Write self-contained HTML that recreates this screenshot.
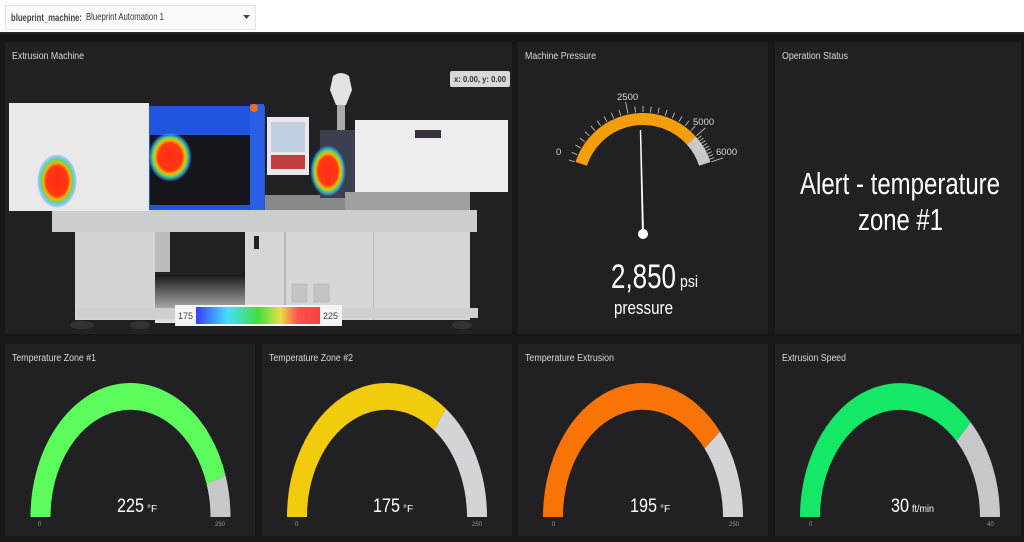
<!DOCTYPE html>
<html><head><meta charset="utf-8"><style>
html,body{margin:0;padding:0;background:#161719;width:1024px;height:542px;overflow:hidden}
svg{display:block;font-family:"Liberation Sans",sans-serif}
</style></head><body>
<svg width="1024" height="542" viewBox="0 0 1024 542" xmlns="http://www.w3.org/2000/svg">
<defs>
<radialGradient id="heat" cx="50%" cy="50%" r="50%">
<stop offset="0" stop-color="#ff2a1a"/><stop offset="0.55" stop-color="#ff3a10"/><stop offset="0.68" stop-color="#ffb000"/><stop offset="0.78" stop-color="#5ce05c"/><stop offset="0.9" stop-color="#40b0ff" stop-opacity="0.6"/><stop offset="1" stop-color="#4060ff" stop-opacity="0"/>
</radialGradient>
<linearGradient id="cbar" x1="0" x2="1">
<stop offset="0" stop-color="#3a3aff"/><stop offset="0.25" stop-color="#40e0ff"/><stop offset="0.5" stop-color="#40e040"/><stop offset="0.68" stop-color="#e8e040"/><stop offset="0.82" stop-color="#ff5050"/><stop offset="1" stop-color="#ff4040"/>
</linearGradient>
<linearGradient id="floor" x1="0" y1="0" x2="0" y2="1"><stop offset="0" stop-color="#1a1a1a"/><stop offset="1" stop-color="#e8e8e8"/></linearGradient>
</defs>
<rect x="0" y="0" width="1024" height="33" fill="#ffffff"/>
<rect x="0" y="32" width="1024" height="2" fill="#2a2a2c"/>
<rect x="5.5" y="5.5" width="250" height="24" fill="#fafafa" stroke="#e4e4e4"/>
<text x="11" y="21" font-size="10" font-weight="bold" fill="#444" textLength="71" lengthAdjust="spacingAndGlyphs">blueprint_machine:</text>
<text x="86" y="20" font-size="10" fill="#333" textLength="78" lengthAdjust="spacingAndGlyphs">Blueprint Automation 1</text>
<path d="M243,15 h7 l-3.5,4 z" fill="#444"/>
<rect x="5" y="42" width="507" height="292" fill="#212124"/>
<rect x="518" y="42" width="250" height="292" fill="#212124"/>
<rect x="775" y="42" width="246" height="292" fill="#212124"/>
<rect x="5" y="344" width="250" height="192" fill="#212124"/>
<rect x="262" y="344" width="250" height="192" fill="#212124"/>
<rect x="518" y="344" width="250" height="192" fill="#212124"/>
<rect x="775" y="344" width="246" height="192" fill="#212124"/>
<g font-size="10" fill="#d8d9da">
<text x="12" y="59" textLength="72" lengthAdjust="spacingAndGlyphs">Extrusion Machine</text>
<text x="525" y="59" textLength="71" lengthAdjust="spacingAndGlyphs">Machine Pressure</text>
<text x="782" y="59" textLength="66" lengthAdjust="spacingAndGlyphs">Operation Status</text>
<text x="12" y="361" textLength="84" lengthAdjust="spacingAndGlyphs">Temperature Zone #1</text>
<text x="269" y="361" textLength="84" lengthAdjust="spacingAndGlyphs">Temperature Zone #2</text>
<text x="525" y="361" textLength="89" lengthAdjust="spacingAndGlyphs">Temperature Extrusion</text>
<text x="782" y="361" textLength="64" lengthAdjust="spacingAndGlyphs">Extrusion Speed</text>
</g>
<rect x="155" y="275" width="90" height="48" fill="url(#floor)"/>
<rect x="75" y="232" width="80" height="88" fill="#d4d4d4"/>
<rect x="155" y="232" width="15" height="40" fill="#bbb"/>
<rect x="245" y="232" width="225" height="88" fill="#d6d6d6"/>
<rect x="284" y="232" width="2" height="88" fill="#b8b8b8"/>
<rect x="373" y="232" width="1" height="88" fill="#bcbcbc"/>
<rect x="254" y="236" width="5" height="13" fill="#222"/>
<rect x="292" y="284" width="15" height="18" fill="#c4c4c4" stroke="#aaa" stroke-width="0.5"/>
<rect x="314" y="284" width="15" height="18" fill="#c4c4c4" stroke="#aaa" stroke-width="0.5"/>
<rect x="78" y="308" width="400" height="10" fill="#cfcfcf"/>
<ellipse cx="82" cy="325" rx="12" ry="4" fill="#333"/>
<ellipse cx="140" cy="325" rx="10" ry="4" fill="#333"/>
<ellipse cx="462" cy="325" rx="10" ry="4" fill="#333"/>
<rect x="52" y="210" width="425" height="22" fill="#cdcdcd"/>
<rect x="9" y="103" width="140" height="108" fill="#e9e9e9"/>
<rect x="149" y="106" width="116" height="104" fill="#1f55e0"/>
<rect x="150" y="135" width="100" height="70" fill="#15161c"/>
<rect x="250" y="104" width="14" height="106" fill="#2a5fe8"/>
<circle cx="254" cy="108" r="4" fill="#ff6a10"/>
<rect x="265" y="195" width="90" height="15" fill="#888"/>
<rect x="267" y="117" width="42" height="58" fill="#e8e8ee"/>
<rect x="271" y="122" width="34" height="30" fill="#c0d0e0"/>
<rect x="271" y="155" width="34" height="14" fill="#c04040"/>
<path d="M333,76 Q341,70 349,76 L352,90 L346,105 L336,105 L330,90 Z" fill="#e2e2e2"/>
<rect x="337" y="105" width="8" height="25" fill="#aaa"/>
<rect x="320" y="130" width="40" height="68" fill="#3a4050"/>
<rect x="355" y="120" width="153" height="72" fill="#ededed"/>
<rect x="415" y="130" width="26" height="8" fill="#3a3040"/>
<rect x="345" y="192" width="125" height="18" fill="#a0a0a0"/>
<ellipse cx="57" cy="181" rx="20" ry="27" fill="url(#heat)"/>
<ellipse cx="170" cy="157" rx="22" ry="25" fill="url(#heat)"/>
<ellipse cx="328" cy="171" rx="18" ry="26" fill="url(#heat)"/>
<rect x="175" y="305" width="167" height="21" fill="#f4f4f4"/>
<rect x="196" y="307" width="124" height="17" fill="url(#cbar)"/>
<text x="178" y="319" font-size="9" fill="#444">175</text>
<text x="323" y="319" font-size="9" fill="#444">225</text>
<rect x="450" y="71" width="60" height="16" rx="2" fill="#d8d8d8"/>
<text x="454" y="82" font-size="8.5" font-weight="bold" fill="#333" textLength="52" lengthAdjust="spacingAndGlyphs">x: 0.00, y: 0.00</text>
<path d="M581.2,163.9 A65 65 0 0 1 691.3,140.5" fill="none" stroke="#f59e0b" stroke-width="12"/>
<path d="M691.3,140.5 A65 65 0 0 1 704.8,163.9" fill="none" stroke="#c8c8c8" stroke-width="12"/>
<g stroke="#cfcfcf" stroke-width="0.8">
<line x1="643" y1="112" x2="643" y2="106" transform="rotate(-72 643 184)"/>
<line x1="643" y1="112" x2="643" y2="106" transform="rotate(-66 643 184)"/>
<line x1="643" y1="112" x2="643" y2="106" transform="rotate(-60 643 184)"/>
<line x1="643" y1="112" x2="643" y2="106" transform="rotate(-54 643 184)"/>
<line x1="643" y1="112" x2="643" y2="106" transform="rotate(-48 643 184)"/>
<line x1="643" y1="112" x2="643" y2="106" transform="rotate(-42 643 184)"/>
<line x1="643" y1="112" x2="643" y2="106" transform="rotate(-36 643 184)"/>
<line x1="643" y1="112" x2="643" y2="106" transform="rotate(-30 643 184)"/>
<line x1="643" y1="112" x2="643" y2="106" transform="rotate(-24 643 184)"/>
<line x1="643" y1="112" x2="643" y2="106" transform="rotate(-18 643 184)"/>
<line x1="643" y1="112" x2="643" y2="100" transform="rotate(-12 643 184)"/>
<line x1="643" y1="112" x2="643" y2="106" transform="rotate(-6 643 184)"/>
<line x1="643" y1="112" x2="643" y2="106"/>
<line x1="643" y1="112" x2="643" y2="106" transform="rotate(6 643 184)"/>
<line x1="643" y1="112" x2="643" y2="106" transform="rotate(12 643 184)"/>
<line x1="643" y1="112" x2="643" y2="106" transform="rotate(18 643 184)"/>
<line x1="643" y1="112" x2="643" y2="106" transform="rotate(24 643 184)"/>
<line x1="643" y1="112" x2="643" y2="106" transform="rotate(30 643 184)"/>
<line x1="643" y1="112" x2="643" y2="106" transform="rotate(36 643 184)"/>
<line x1="643" y1="112" x2="643" y2="106" transform="rotate(42 643 184)"/>
<line x1="643" y1="112" x2="643" y2="100" transform="rotate(48 643 184)"/>
<line x1="643" y1="118" x2="643" y2="108" transform="rotate(50.4 643 184)"/>
<line x1="643" y1="118" x2="643" y2="108" transform="rotate(52.8 643 184)"/>
<line x1="643" y1="118" x2="643" y2="108" transform="rotate(55.2 643 184)"/>
<line x1="643" y1="118" x2="643" y2="108" transform="rotate(57.6 643 184)"/>
<line x1="643" y1="118" x2="643" y2="108" transform="rotate(60 643 184)"/>
<line x1="643" y1="118" x2="643" y2="108" transform="rotate(62.4 643 184)"/>
<line x1="643" y1="118" x2="643" y2="108" transform="rotate(64.8 643 184)"/>
<line x1="643" y1="118" x2="643" y2="108" transform="rotate(67.2 643 184)"/>
<line x1="643" y1="118" x2="643" y2="108" transform="rotate(69.6 643 184)"/>
<line x1="643" y1="112" x2="643" y2="100" transform="rotate(72 643 184)"/>
</g>
<g font-size="9.5" fill="#d8d9da">
<text x="556" y="155">0</text>
<text x="617" y="100">2500</text>
<text x="693" y="125">5000</text>
<text x="716" y="155">6000</text>
</g>
<path d="M639.8,130 L641.2,130 L644,234 L642,234 Z" fill="#fff"/>
<circle cx="643" cy="234" r="5" fill="#fff"/>
<text x="611" y="288" font-size="34" fill="#fff" textLength="65" lengthAdjust="spacingAndGlyphs">2,850</text>
<text x="680" y="287" font-size="17" fill="#fff" textLength="18" lengthAdjust="spacingAndGlyphs">psi</text>
<text x="614" y="314" font-size="18" fill="#fff" textLength="59" lengthAdjust="spacingAndGlyphs">pressure</text>
<text x="800" y="194" font-size="31" fill="#fff" textLength="200" lengthAdjust="spacingAndGlyphs">Alert - temperature</text>
<text x="858" y="230" font-size="31" fill="#fff" textLength="85" lengthAdjust="spacingAndGlyphs">zone #1</text>
<g fill="none" stroke-width="20">
<g transform="translate(130.5,517) scale(1,1.34)">
<path d="M-90,0 A90 90 0 0 1 85.6,-27.8" stroke="#5cfc5c"/>
<path d="M85.6,-27.8 A90 90 0 0 1 90,0" stroke="#c8c8cc"/>
</g>
<g transform="translate(387,517) scale(1,1.34)">
<path d="M-90,0 A90 90 0 0 1 52.9,-72.8" stroke="#f2cc0c"/>
<path d="M52.9,-72.8 A90 90 0 0 1 90,0" stroke="#d4d4d8"/>
</g>
<g transform="translate(643,517) scale(1,1.34)">
<path d="M-90,0 A90 90 0 0 1 69.3,-57.4" stroke="#f97406"/>
<path d="M69.3,-57.4 A90 90 0 0 1 90,0" stroke="#d4d4d8"/>
</g>
<g transform="translate(900,517) scale(1,1.34)">
<path d="M-90,0 A90 90 0 0 1 63.6,-63.6" stroke="#14e866"/>
<path d="M63.6,-63.6 A90 90 0 0 1 90,0" stroke="#c8c8cc"/>
</g>
</g>
<g fill="#fff">
<text x="117" y="512" font-size="19" textLength="27" lengthAdjust="spacingAndGlyphs">225</text>
<text x="147" y="512" font-size="10">°F</text>
<text x="373" y="512" font-size="19" textLength="27" lengthAdjust="spacingAndGlyphs">175</text>
<text x="403" y="512" font-size="10">°F</text>
<text x="630" y="512" font-size="19" textLength="27" lengthAdjust="spacingAndGlyphs">195</text>
<text x="660" y="512" font-size="10">°F</text>
<text x="891" y="512" font-size="19" textLength="18" lengthAdjust="spacingAndGlyphs">30</text>
<text x="912" y="512" font-size="10" textLength="22" lengthAdjust="spacingAndGlyphs">ft/min</text>
</g>
<g font-size="6" fill="#9a9a9a">
<text x="38" y="526">0</text><text x="215" y="526">250</text>
<text x="295" y="526">0</text><text x="472" y="526">250</text>
<text x="552" y="526">0</text><text x="729" y="526">250</text>
<text x="809" y="526">0</text><text x="987" y="526">40</text>
</g>
</svg>
</body></html>
